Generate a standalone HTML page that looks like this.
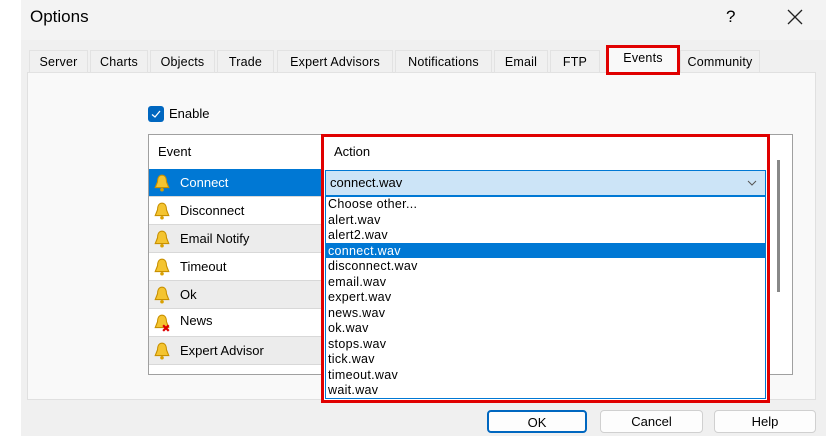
<!DOCTYPE html>
<html><head><style>
*{margin:0;padding:0;box-sizing:border-box}
body{width:840px;height:436px;background:#fff;font-family:"Liberation Sans",sans-serif;font-size:13px;color:#000;position:relative;overflow:hidden}
.a{position:absolute}
.dlg{left:21px;top:0;width:805px;height:436px;background:#f0f0f0}
.tab{top:50px;height:23px;background:#f0f0f0;border:1px solid #e2e2e2;text-align:center;line-height:22px;font-size:12.5px;letter-spacing:.2px}
.panel{left:27px;top:72px;width:789px;height:328px;background:#f9f9f9;border:1px solid #e0e0e0}
.row{left:149px;width:173px;height:28px;line-height:27px;border-bottom:1px solid #d8d8d8;padding-left:31px;font-size:13px}
.bell{position:absolute;left:5px;top:5px;width:16px;height:18px}
.it{left:328px;height:15.5px;line-height:15px;font-size:12.5px;letter-spacing:.3px}
.btn{top:410px;height:23px;background:#fdfdfd;border:1px solid #d0d0d0;border-radius:4px;text-align:center;line-height:21px;font-size:13px}
</style></head><body>
<div class="a dlg"></div>
<div class="a" style="left:21px;top:0;width:805px;height:40px;background:#f3f3f3"></div>
<div class="a" style="left:30px;top:7px;font-size:17px">Options</div>
<div class="a" style="left:726px;top:7px;font-size:17px">?</div>
<svg class="a" style="left:787px;top:9px" width="16" height="16"><path d="M1 1L15 15M15 1L1 15" stroke="#222" stroke-width="1.3"/></svg>
<div class="a panel"></div>
<div class="a tab" style="left:29px;width:59px">Server</div>
<div class="a tab" style="left:90px;width:58px">Charts</div>
<div class="a tab" style="left:150px;width:65px">Objects</div>
<div class="a tab" style="left:217px;width:57px">Trade</div>
<div class="a tab" style="left:277px;width:116px">Expert Advisors</div>
<div class="a tab" style="left:395px;width:97px">Notifications</div>
<div class="a tab" style="left:494px;width:54px">Email</div>
<div class="a tab" style="left:550px;width:50px">FTP</div>
<div class="a tab" style="left:606px;top:45px;width:74px;height:30px;background:#f9f9f9;border:3px solid #e00000;line-height:20px">Events</div>
<div class="a tab" style="left:680px;width:80px">Community</div>
<div class="a" style="left:148px;top:106px;width:16px;height:16px;background:#0067c0;border-radius:3px"><svg width="16" height="16"><path d="M4 8.5L7 11L12 5" stroke="#fff" stroke-width="1.3" fill="none"/></svg></div>
<div class="a" style="left:169px;top:106px">Enable</div>
<div class="a" style="left:148px;top:134px;width:645px;height:241px;background:#fff;border:1px solid #a0a0a0"></div>
<div class="a" style="left:158px;top:144px">Event</div>
<div class="a" style="left:777px;top:160px;width:3px;height:132px;background:#888"></div>
<div class="a row" style="top:169px;background:#0078d4;color:#fff"><svg class="bell" viewBox="0 0 14 16"><path d="M7 1C4 1 3 4 3 7L1 12H13L11 7C11 4 10 1 7 1Z" fill="#f4c430" stroke="#c89000"/><circle cx="7" cy="14" r="1.6" fill="#d9a000"/></svg>Connect</div>
<div class="a row" style="top:197px;background:#fff"><svg class="bell" viewBox="0 0 14 16"><path d="M7 1C4 1 3 4 3 7L1 12H13L11 7C11 4 10 1 7 1Z" fill="#f4c430" stroke="#c89000"/><circle cx="7" cy="14" r="1.6" fill="#d9a000"/></svg>Disconnect</div>
<div class="a row" style="top:225px;background:#ececec"><svg class="bell" viewBox="0 0 14 16"><path d="M7 1C4 1 3 4 3 7L1 12H13L11 7C11 4 10 1 7 1Z" fill="#f4c430" stroke="#c89000"/><circle cx="7" cy="14" r="1.6" fill="#d9a000"/></svg>Email Notify</div>
<div class="a row" style="top:253px;background:#fff"><svg class="bell" viewBox="0 0 14 16"><path d="M7 1C4 1 3 4 3 7L1 12H13L11 7C11 4 10 1 7 1Z" fill="#f4c430" stroke="#c89000"/><circle cx="7" cy="14" r="1.6" fill="#d9a000"/></svg>Timeout</div>
<div class="a row" style="top:281px;background:#ececec"><svg class="bell" viewBox="0 0 14 16"><path d="M7 1C4 1 3 4 3 7L1 12H13L11 7C11 4 10 1 7 1Z" fill="#f4c430" stroke="#c89000"/><circle cx="7" cy="14" r="1.6" fill="#d9a000"/></svg>Ok</div>
<div class="a row" style="top:309px;background:#fff;line-height:24px"><svg class="bell" viewBox="0 0 14 16"><path d="M7 1C4 1 3 4 3 7L1 12H13L11 7C11 4 10 1 7 1Z" fill="#f4c430" stroke="#c89000"/><path d="M8 10L13 15M13 10L8 15" stroke="#d00" stroke-width="2"/></svg>News</div>
<div class="a row" style="top:337px;background:#ececec"><svg class="bell" viewBox="0 0 14 16"><path d="M7 1C4 1 3 4 3 7L1 12H13L11 7C11 4 10 1 7 1Z" fill="#f4c430" stroke="#c89000"/><circle cx="7" cy="14" r="1.6" fill="#d9a000"/></svg>Expert Advisor</div>
<div class="a" style="left:321px;top:134px;width:449px;height:269px;border:3px solid #e00000;background:#fff"></div>
<div class="a" style="left:334px;top:144px">Action</div>
<div class="a" style="left:325px;top:170px;width:441px;height:26px;background:#cce4f7;border:1px solid #0078d4;padding-left:4px;line-height:23px">connect.wav<svg style="position:absolute;right:8px;top:9px" width="10" height="6"><path d="M1 1L5 5L9 1" stroke="#555" fill="none"/></svg></div>
<div class="a" style="left:325px;top:196px;width:441px;height:203px;background:#fff;border:1px solid #0078d4"></div>
<div class="a" style="left:326px;top:243px;width:439px;height:15px;background:#0078d4"></div>
<div class="a it" style="top:197px">Choose other...</div>
<div class="a it" style="top:212.5px">alert.wav</div>
<div class="a it" style="top:228px">alert2.wav</div>
<div class="a it" style="top:243.5px;color:#fff">connect.wav</div>
<div class="a it" style="top:259px">disconnect.wav</div>
<div class="a it" style="top:274.5px">email.wav</div>
<div class="a it" style="top:290px">expert.wav</div>
<div class="a it" style="top:305.5px">news.wav</div>
<div class="a it" style="top:321px">ok.wav</div>
<div class="a it" style="top:336.5px">stops.wav</div>
<div class="a it" style="top:352px">tick.wav</div>
<div class="a it" style="top:367.5px">timeout.wav</div>
<div class="a it" style="top:383px">wait.wav</div>
<div class="a btn" style="left:487px;width:100px;border:2px solid #0067c0">OK</div>
<div class="a btn" style="left:600px;width:103px">Cancel</div>
<div class="a btn" style="left:714px;width:102px">Help</div>
</body></html>
